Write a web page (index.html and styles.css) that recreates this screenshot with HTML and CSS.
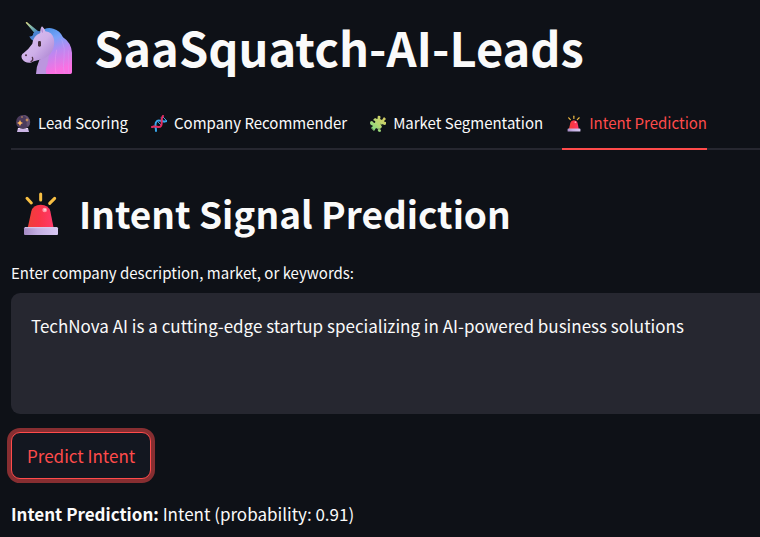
FILE: index.html
```html
<!DOCTYPE html>
<html lang="en">
<head>
<meta charset="utf-8">
<meta name="viewport" content="width=device-width, initial-scale=1">
<title>SaaSquatch-AI-Leads</title>
<link rel="stylesheet" href="styles.css">
</head>
<body>
<svg class="defs" aria-hidden="true">
  <defs>
    <linearGradient id="dome" x1="0" y1="0" x2="1" y2="0">
      <stop offset="0" stop-color="#ee4038"/><stop offset=".45" stop-color="#fa3548"/><stop offset="1" stop-color="#ff3a6c"/>
    </linearGradient>
    <linearGradient id="base" x1="0" y1="0" x2="1" y2="0">
      <stop offset="0" stop-color="#a58bc4"/><stop offset=".4" stop-color="#c3aee2"/><stop offset="1" stop-color="#d8c9f4"/>
    </linearGradient>
    <symbol id="siren" viewBox="69 33 108 135">
      <g stroke="#f8c044" stroke-width="9" stroke-linecap="round">
        <path d="M81 55L94 69"/><path d="M122 42V60"/><path d="M164 55L149 70"/>
      </g>
      <path d="M83 144L94 94Q99 74 122 74Q146 74 151 94L161 144Z" fill="url(#dome)"/>
      <circle cx="134" cy="90" r="7" fill="#ff9bab"/><circle cx="135" cy="89" r="3" fill="#ffd5dc"/>
      <rect x="72" y="142" width="102" height="23" rx="3" fill="url(#base)"/>
      <path d="M75 143H171" stroke="#dccff2" stroke-width="3"/>
    </symbol>
  </defs>
</svg>
<main class="page">
  <h1 class="title">
    <svg class="unicorn" viewBox="30 30 159 165" aria-hidden="true">
      <defs>
        <linearGradient id="mane" x1="0" y1="0" x2=".25" y2="1">
          <stop offset="0" stop-color="#448ee2"/><stop offset=".3" stop-color="#79a3fa"/><stop offset=".6" stop-color="#bc88f1"/><stop offset="1" stop-color="#fb70e2"/>
        </linearGradient>
        <linearGradient id="face" x1="0" y1="0" x2="1" y2="1">
          <stop offset="0" stop-color="#dcc5f2"/><stop offset=".55" stop-color="#cfb0e9"/><stop offset="1" stop-color="#a47acd"/>
        </linearGradient>
        <linearGradient id="horn" x1="0" y1="0" x2="1" y2="1">
          <stop offset="0" stop-color="#ede384"/><stop offset=".4" stop-color="#87bca9"/><stop offset="1" stop-color="#387dc1"/>
        </linearGradient>
      </defs>
      <path d="M47 38Q50 34 54 39L84 63L76 72Z" fill="url(#horn)"/>
      <path d="M58 79Q66 80 69 75Q68 69 74 66Q83 60 96 66L91 85L76 93Q63 93 58 79Z" fill="#4b83d3"/>
      <path d="M91 65Q108 50 130 56Q150 61 159 82Q183 97 186 128V187Q186 192 181 192H101L113 122Z" fill="url(#mane)"/>
      <path d="M78 192Q79 169 88 150L118 128L112 166Q105 176 109 192Z" fill="#bc96df"/>
      <path d="M91 69Q90 55 96 49Q104 56 106 64Q127 66 132 88Q136 113 120 133Q104 148 83 151Q71 154 62 158Q44 160 36 146Q31 135 41 129Q54 120 67 101Q69 78 91 69Z" fill="url(#face)"/>
      <path d="M95 53Q93 64 97 69Q101 64 95 53Z" fill="#ac83cf"/>
      <rect x="84" y="93" width="9" height="17" rx="4" fill="#442d3b"/>
      <circle cx="48" cy="136" r="3" fill="#513449"/>
      <path d="M67 142Q71 151 63 155" fill="none" stroke="#523548" stroke-width="4" stroke-linecap="round"/>
      <g fill="none" stroke-width="3" opacity=".3">
        <path d="M155 88Q167 114 162 144Q158 171 163 190" stroke="#d1b4ff"/>
        <path d="M140 119Q132 159 138 190" stroke="#ffb0f0"/>
        <path d="M175 121Q178 157 175 190" stroke="#dca0ff"/>
      </g>
    </svg>
    <span>SaaSquatch-AI-Leads</span>
  </h1>

  <div class="tabs" role="tablist">
    <button class="tab" type="button" role="tab" aria-selected="false">
      <svg class="tab-icon" viewBox="0 0 16 17" aria-hidden="true">
        <path d="M3 13H13L14 17H2Z" fill="#cbb5e5"/><path d="M3 13H13V14H3Z" fill="#ede1fa"/>
        <circle cx="8" cy="7" r="7" fill="#4b3b5c"/><path d="M8 0A7 7 0 0 1 13 12Q10 9 13 5Q11 2 8 0Z" fill="#62506f"/>
        <path d="M5 5L6 7L8 8L6 9L5 11L4 9L2 8L4 7Z" fill="#ffb95f"/>
        <path d="M12 3L12.6 4.4L14 5L12.6 5.6L12 7L11.4 5.6L10 5L11.4 4.4Z" fill="#eda858"/>
        <circle cx="7" cy="2" r=".8" fill="#dc9b61"/>
      </svg>
      <span>Lead Scoring</span>
    </button>
    <button class="tab" type="button" role="tab" aria-selected="false">
      <svg class="tab-icon" viewBox="0 0 16 17" aria-hidden="true">
        <g fill="none" stroke-linecap="round">
          <path d="M3 11L5 14M10 3L13 7M12 2L15 5M7 7L10 10" stroke="#3c9be1"/>
          <path d="M5 16C5 12 3 8 6 6C9 4 12 8 16 6" stroke="#38a8ec" stroke-width="2"/>
          <path d="M1 12C5 10 8 14 10 11C12 8 9 4 12 1" stroke="#e32c60" stroke-width="2"/>
        </g>
      </svg>
      <span>Company Recommender</span>
    </button>
    <button class="tab" type="button" role="tab" aria-selected="false">
      <svg class="tab-icon" viewBox="0 0 16 17" aria-hidden="true">
        <defs><linearGradient id="puzzle" x1="1" y1="0" x2="0" y2="1"><stop offset="0" stop-color="#dcc95d"/><stop offset=".5" stop-color="#b8d873"/><stop offset="1" stop-color="#65d982"/></linearGradient></defs>
        <path d="M5 3L7 4Q8 4 7.500 2Q8 0 10 1Q11 2 10 4L12 5L14 2L16 4L14 6Q14 7 16 7Q17 10 14 10Q12 8 11 10L12 12L10 14Q12 16 10 17Q7 17 8 14L6 13L4 16L1 13L3 11Q2 10 1 10Q-1 8 1 6Q3 6 4 8Q6 8 5 6L3 5Z" fill="url(#puzzle)"/>
        <path d="M10 9L13 10M8 14L10 14M2 13L4 16" stroke="#637a4a" stroke-width=".7"/>
      </svg>
      <span>Market Segmentation</span>
    </button>
    <button class="tab active" type="button" role="tab" aria-selected="true">
      <svg class="tab-icon" aria-hidden="true"><use href="#siren"/></svg>
      <span>Intent Prediction</span>
    </button>
  </div>

  <section role="tabpanel" aria-label="Intent Prediction">
    <h2 class="heading">
      <svg class="siren" aria-hidden="true"><use href="#siren"/></svg>
      <span>Intent Signal Prediction</span>
    </h2>
    <label class="label" for="description">Enter company description, market, or keywords:</label>
    <textarea class="field" id="description">TechNova AI is a cutting-edge startup specializing in AI-powered business solutions</textarea>
    <button class="predict" type="button">Predict Intent</button>
    <p class="result"><strong>Intent Prediction:</strong> Intent (probability: 0.91)</p>
  </section>
</main>
</body>
</html>
```

FILE: styles.css
```css
* {
  box-sizing: border-box;
}

body {
  margin: 0;
  background: #0e1117;
  color: #fafafa;
  font-family: "Noto Sans CJK SC", "Open Sans", sans-serif;
  font-size: 17px;
  line-height: 24px;
}

button,
textarea {
  font: inherit;
}

.defs {
  position: absolute;
  width: 0;
  height: 0;
}

.page {
  padding: 15px 0 8px 11px;
}

.title,
.heading {
  display: flex;
  align-items: center;
  margin: 0;
  white-space: nowrap;
}

.title {
  gap: 21px;
  padding-left: 9px;
  font-size: 47px;
  font-weight: 700;
  line-height: 64px;
}

.unicorn {
  width: 53px;
  height: 55px;
}

.tabs {
  display: flex;
  gap: 19px;
  height: 52px;
  margin-top: 19px;
  border-bottom: 2px solid #262730;
  font-size: 15px;
  white-space: nowrap;
}

.tab {
  display: flex;
  flex: none;
  align-items: center;
  gap: 7px;
  height: 52px;
  padding: 0 0 0 4px;
  border: 0;
  border-bottom: 2px solid transparent;
  background: none;
  color: inherit;
}

.tab.active {
  border-color: #ff4b4b;
  color: #ff4b4b;
}

.tab-icon {
  width: 16px;
  height: 17px;
}

.heading {
  gap: 20px;
  margin-top: 35px;
  padding-left: 12px;
  font-size: 37px;
  font-weight: 600;
  line-height: 56px;
}

.siren {
  width: 36px;
  height: 45px;
}

.label {
  display: block;
  margin-top: 20px;
  font-size: 15px;
}

.field {
  display: block;
  width: 100%;
  height: 121px;
  margin: 8px 0 18px;
  padding: 21px 20px;
  border: 0;
  border-radius: 9px 0 0 9px;
  outline: 0;
  resize: none;
  background: #262730;
  color: inherit;
}

.predict {
  display: block;
  height: 47px;
  padding: 0 15px;
  border: 1px solid #ff4b4b;
  border-radius: 9px;
  background: #131720;
  box-shadow: 0 0 0 4px rgba(255, 75, 75, 0.5);
  color: #ff4b4b;
}

.result {
  margin: 23px 0 0;
}
```
